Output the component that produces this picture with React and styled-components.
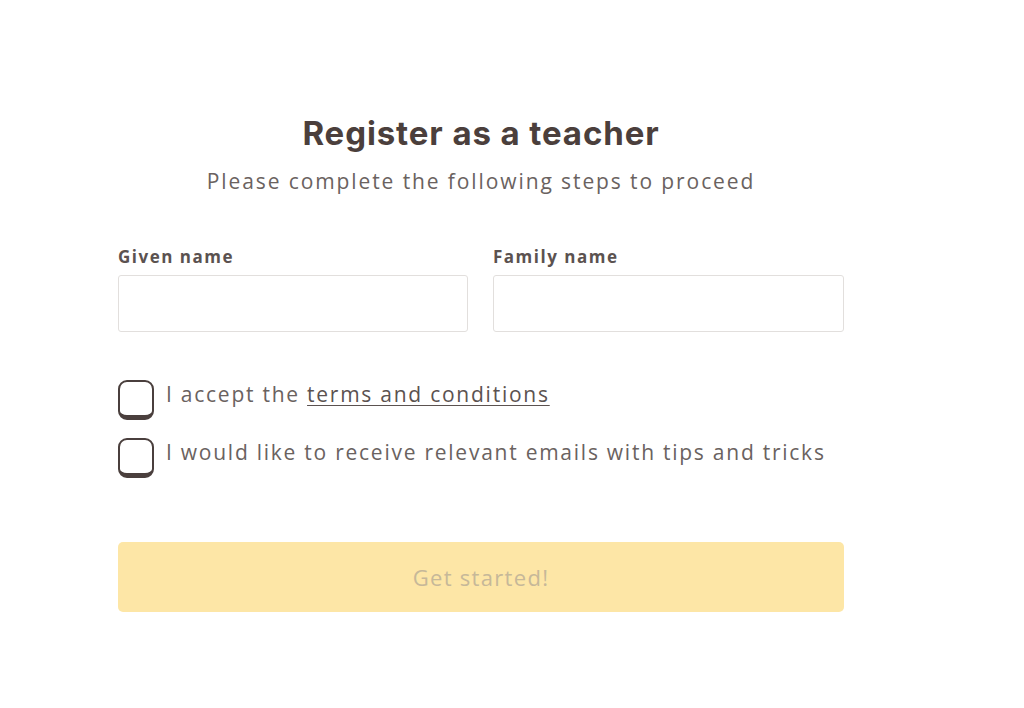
import React from "react";
import styled, { createGlobalStyle } from "styled-components";

const Global = createGlobalStyle`
  html, body { margin: 0; padding: 0; background: #fff; }
  body { font-family: "Open Sans", "Liberation Sans", sans-serif; }
  * { box-sizing: border-box; }
`;

const Page = styled.div`
  width: 1024px;
  height: 708px;
  padding: 113px 0 0 118px;
`;

const Form = styled.div`
  width: 726px;
  display: flex;
  flex-direction: column;
`;

const Title = styled.h1`
  margin: 0;
  text-align: center;
  font-family: "Inter", "Open Sans", sans-serif;
  font-weight: 700;
  font-size: 33px;
  line-height: 40px;
  color: #4b3f3c;
  letter-spacing: 0.9px;
`;

const Subtitle = styled.p`
  margin: 14px 0 0;
  text-align: center;
  font-size: 21px;
  line-height: 28px;
  color: #6a6260;
  letter-spacing: 1.9px;
`;

const Row = styled.div`
  display: grid;
  grid-template-columns: 350px 351px;
  column-gap: 25px;
  margin-top: 51px;
`;

const Field = styled.div`
  display: flex;
  flex-direction: column;
`;

const Label = styled.label`
  font-size: 17px;
  font-weight: 700;
  line-height: 22px;
  color: #5b5250;
  letter-spacing: 1.5px;
  margin-bottom: 7px;
`;

const Input = styled.input`
  height: 57px;
  border: 1px solid #e2dfdd;
  border-radius: 3px;
  background: #fff;
  outline: none;
`;

const Checks = styled.div`
  display: flex;
  flex-direction: column;
  gap: 18px;
  margin-top: 48px;
`;

const CheckRow = styled.label`
  display: flex;
  align-items: flex-start;
  gap: 12px;
`;

const Box = styled.span`
  width: 36px;
  height: 40px;
  flex: none;
  border: 2px solid #4a3f3d;
  border-bottom-width: 5px;
  border-radius: 9px;
  background: #fff;
`;

const CheckText = styled.span`
  font-size: 21px;
  line-height: 28px;
  color: #6a6260;
  letter-spacing: 1.75px;
  margin-top: 0px;
`;

const Link = styled.a`
  color: #5b5250;
  text-decoration: underline;
  text-underline-offset: 3px;
  text-decoration-thickness: 1px;
`;

const Button = styled.button`
  margin-top: 64px;
  height: 70px;
  border: none;
  border-radius: 5px;
  background: #fde6a6;
  color: #c6b899;
  font-family: "Open Sans", sans-serif;
  font-size: 22px;
  letter-spacing: 1.3px;
`;

export default function App() {
  return (
    <>
      <Global />
      <Page>
        <Form>
          <Title>Register as a teacher</Title>
          <Subtitle>Please complete the following steps to proceed</Subtitle>
          <Row>
            <Field>
              <Label>Given name</Label>
              <Input />
            </Field>
            <Field>
              <Label>Family name</Label>
              <Input />
            </Field>
          </Row>
          <Checks>
            <CheckRow>
              <Box />
              <CheckText>
                I accept the <Link>terms and conditions</Link>
              </CheckText>
            </CheckRow>
            <CheckRow>
              <Box />
              <CheckText>I would like to receive relevant emails with tips and tricks</CheckText>
            </CheckRow>
          </Checks>
          <Button disabled>Get started!</Button>
        </Form>
      </Page>
    </>
  );
}
